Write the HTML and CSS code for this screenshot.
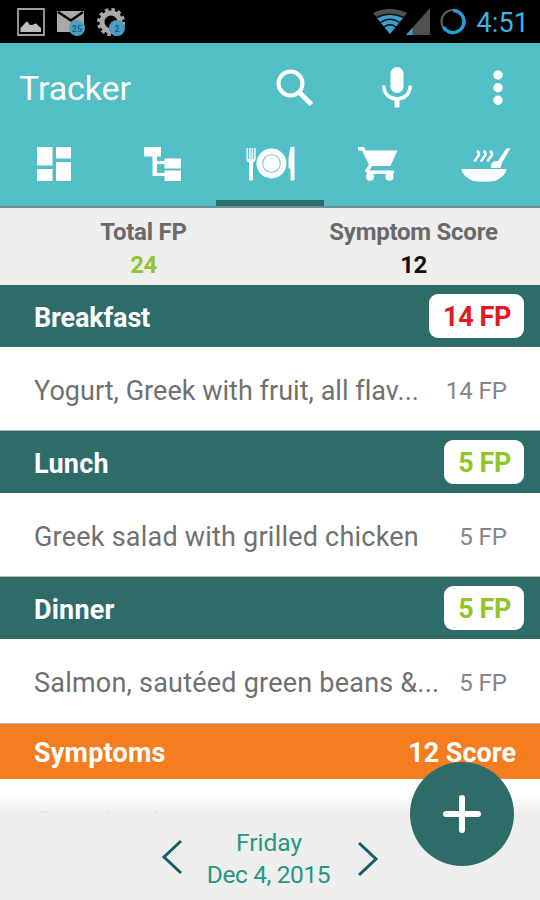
FILE: index.html
```html
<!DOCTYPE html>
<html lang="en">
<head>
<meta charset="utf-8">
<title>Tracker</title>
<link rel="stylesheet" href="styles.css">
</head>
<body>
<div class="app">
  <div class="statusbar">
    <div class="notices">
      <svg width="28" height="28" viewBox="0 0 28 28"><path fill="none" stroke="#a0a0a0" stroke-width="1.800" d="M1 1h26v26H1z"/><path fill="#bdbdbd" d="M3.500 24v-4l2-2 3.500-4q1-1 2 .5l2 2.500h2l3.500-1.500q1.500 0 2.500 2l3 2.500v4z"/></svg>
      <svg width="30" height="28" viewBox="0 0 30 28"><path fill="#a9a9a9" d="M1 3h27v21H1z"/><path fill="none" stroke="#000" stroke-width="2.500" d="M2 4l13 8.500L27 4"/><circle cx="21" cy="20" r="8" fill="#4b9fc5"/><text class="count" x="21" y="23.500" text-anchor="middle">25</text></svg>
      <svg width="30" height="28" viewBox="0 0 30 28"><circle cx="14" cy="14" r="12.500" fill="none" stroke="#a9a9a9" stroke-width="3" stroke-dasharray="3.500 3.045"/><circle cx="14" cy="14" r="9" fill="none" stroke="#a9a9a9" stroke-width="5"/><circle cx="20" cy="20" r="8" fill="#4b9fc5"/><text class="count" x="20" y="23.500" text-anchor="middle">2</text></svg>
    </div>
    <div class="system">
      <svg width="34" height="26" viewBox="0 0 34 26"><path fill="#505050" d="M0 5Q17-3 34 5L17 26z"/><path fill="#3aa0cc" d="M3.500 9.500Q17 3 30.500 9.500L17 26z"/><path fill="none" stroke="#0a0a0a" stroke-width="1.500" d="M3.500 9.500Q17 3 30.500 9.500M7.500 14.500q9.500-6.500 19 0M11 19q6-4.500 12 0"/></svg>
      <svg width="24" height="27" viewBox="0 0 24 27"><path fill="#505050" d="M24 0v27H0z"/><path fill="#3aa0cc" d="M6.500 19.700V27H0z"/></svg>
      <svg width="26" height="27" viewBox="0 0 26 27"><circle cx="13" cy="13.500" r="11.500" fill="none" stroke="#606060" stroke-width="2"/><path fill="none" stroke="#22a0d3" stroke-width="3.500" d="M13 2.500a11 11 0 1 1-9.600 16.300"/></svg>
      <span class="clock">4:51</span>
    </div>
  </div>
  <header class="appbar">
    <div class="toolbar">
      <h1 class="title">Tracker</h1>
      <svg class="search" width="38" height="38" viewBox="0 0 38 38"><circle cx="14.500" cy="14.500" r="12" fill="none" stroke="#fff" stroke-width="4"/><path stroke="#fff" stroke-width="5" d="M23 23l12.500 12.500"/></svg>
      <svg class="mic" width="32" height="42" viewBox="0 0 32 42"><rect x="9.500" y="1" width="13" height="26" rx="6.500" fill="#fff"/><path fill="none" stroke="#fff" stroke-width="3.500" d="M2.700 19.500C3 37.500 29 37.500 29.300 19.500"/><path stroke="#fff" stroke-width="5" d="M16 33v8.500"/></svg>
      <svg class="more" width="10" height="36" viewBox="0 0 10 36"><g fill="#fff"><circle cx="5" cy="5" r="4.700"/><circle cx="5" cy="17.700" r="4.700"/><circle cx="5" cy="30.300" r="4.700"/></g></svg>
    </div>
    <nav class="tabs">
      <a class="tab"><svg width="34" height="34" viewBox="0 0 34 34"><path fill="#fff" d="M0 0h15.500v18.500H0zM19 0h15v11.500H19zM0 22h15.500v12H0zM19 15h15v19H19z"/></svg></a>
      <a class="tab"><svg width="37" height="34" viewBox="0 0 37 34"><path fill="#fff" d="M0 0h17v9.500h-4V14h7.500v-2.500H37v10H20.500V17H13v9h7.500v-2.500H37V34H20.500v-5H8.500V9.500H0z"/></svg></a>
      <a class="tab tab-active"><svg width="50" height="34" viewBox="0 0 50 34"><g fill="#fff"><circle cx="26.500" cy="16.500" r="15"/><path d="M1.500 12h9v1q-1 2-2.500 2.500V33q-2 1.500-4 0V15.500Q2 15 1.500 13zM45.500 0h4v33q-2 1.500-4 0V22l-2-1V12z"/></g><path stroke="#fff" stroke-opacity=".85" stroke-width="1.700" d="M2.200 1v11M4.800 1v11M7.300 1v11M9.900 1v11"/><circle cx="26.500" cy="16.500" r="8.800" fill="none" stroke="#8bcdd1" stroke-width="1.200"/></svg></a>
      <a class="tab"><svg width="40" height="34" viewBox="0 0 40 34"><path fill="none" stroke="#fff" stroke-width="3.500" stroke-linejoin="round" d="M0 1.800h5l8 16-4 6 2 1.500h25"/><path fill="#fff" d="M6 3.500h33.500l-7 15.500H13z"/><circle cx="12" cy="29.800" r="4" fill="#fff"/><circle cx="31.500" cy="29.800" r="4" fill="#fff"/></svg></a>
      <a class="tab"><svg width="50" height="36" viewBox="0 0 50 36"><path fill="#fff" d="M.5 22h45C45 27.500 40 31 34 34q-11 1.500-22 0C6 31 1 27.500 .5 22zM30 20q0-7 7-6L45.500 1.200l4 0L41 16l-1.500 5H30z"/><path fill="none" stroke="#fff" stroke-width="2.600" d="M16 4q3.500 2 1.200 5t-3.700 5.500M22.500 4q3.500 2 1.200 5T20 14.500M29 4q3.500 2 1.200 5t-3.700 5.500"/></svg></a>
    </nav>
  </header>
  <section class="summary">
    <div class="stat"><span class="label">Total FP</span><span class="value good">24</span></div>
    <div class="stat"><span class="label">Symptom Score</span><span class="value">12</span></div>
  </section>
  <main class="meals">
    <h2 class="meal"><span class="name">Breakfast</span><span class="badge bad">14 FP</span></h2>
    <div class="item"><span class="food">Yogurt, Greek with fruit, all flav...</span><span class="points">14 FP</span></div>
    <h2 class="meal"><span class="name wide">Lunch</span><span class="badge good">5 FP</span></h2>
    <div class="item"><span class="food roomy">Greek salad with grilled chicken</span><span class="points">5 FP</span></div>
    <h2 class="meal"><span class="name wide">Dinner</span><span class="badge good">5 FP</span></h2>
    <div class="item"><span class="food roomy">Salmon, sautéed green beans &amp;...</span><span class="points">5 FP</span></div>
    <h2 class="meal symptoms"><span class="name wide">Symptoms</span><span class="score">12 Score</span></h2>
    <div class="item next-row"><span class="food roomy">Constipation</span></div>
  </main>
  <footer class="datebar">
    <svg class="prev" width="22" height="36" viewBox="0 0 22 36"><path fill="none" stroke="#135e61" stroke-width="3" d="M20 2L3 18l17 16"/></svg>
    <div class="date"><span class="day">Friday</span><span class="full">Dec 4, 2015</span></div>
    <svg class="next" width="22" height="36" viewBox="0 0 22 36"><path fill="none" stroke="#135e61" stroke-width="3" d="M2 2l17 16L2 34"/></svg>
  </footer>
  <button class="add" aria-label="Add"><svg width="38" height="38" viewBox="0 0 38 38"><path stroke="#fff" stroke-width="6" stroke-linecap="round" d="M19 3v32M3 19h32"/></svg></button>
</div>
</body>
</html>
```
FILE: styles.css
```css
* { box-sizing: border-box; margin: 0; padding: 0; }
body { font-family: Roboto, "Liberation Sans", sans-serif; background: #fff; }
svg { display: block; flex: none; }
span, h1 { white-space: nowrap; }
.app { position: relative; width: 540px; height: 900px; overflow: hidden; display: flex; flex-direction: column; }
.statusbar { flex: none; height: 43px; background: #000; display: flex; justify-content: space-between; padding: 8px 11px 0 17px; }
.notices { display: flex; gap: 11px; }
.system { display: flex; }
.system svg:nth-child(2) { margin-left: -1px; }
.system svg:nth-child(3) { margin-left: 10px; }
.clock { color: #3eb3e2; font-size: 27px; line-height: 31px; margin-left: 11px; letter-spacing: 0.1px; }
.count { font-size: 9px; font-weight: 700; fill: #235f80; }
.appbar { flex: none; height: 165px; background: #52bec5; border-bottom: 2px solid #6c9093; }
.toolbar { height: 90px; display: flex; align-items: flex-start; padding-left: 19px; }
.title { width: 257px; color: #fff; font-size: 34px; line-height: 40px; font-weight: 400; letter-spacing: -0.1px; margin-top: 25px; }
.search { margin-top: 26px; }
.mic { margin: 23px 0 0 67px; }
.more { margin: 27px 0 0 80px; }
.tabs { height: 73px; display: grid; grid-template-columns: repeat(5, 108px); }
.tab { display: flex; justify-content: center; padding-top: 14px; }
.tab-active { border-bottom: 6px solid #2d6c69; }
.summary { flex: none; height: 77px; background: #eee; display: flex; }
.stat { width: 287px; display: flex; flex-direction: column; align-items: center; padding-top: 8px; }
.stat:last-child { width: 253px; }
.label { color: #6a6a6a; font-size: 24px; line-height: 32px; font-weight: 700; letter-spacing: -0.25px; }
.value { color: #111; font-size: 24px; line-height: 34px; font-weight: 700; letter-spacing: -0.5px; }
.meals { flex: none; }
.meal { height: 62px; background: #2e6c6a; color: #fff; display: flex; align-items: center; justify-content: space-between; padding: 0 16px 0 34px; font-size: 27px; line-height: 32px; font-weight: 700; margin-bottom: 0.2px; }
.name, .score { padding-top: 4px; }
.name { letter-spacing: -0.15px; }
.wide { letter-spacing: 0.2px; }
.badge { height: 44px; line-height: 46px; border-radius: 9px; background: #fff; padding: 0 13px 0 14px; font-size: 27px; letter-spacing: -0.4px; }
.item { height: 84px; display: flex; align-items: center; justify-content: space-between; padding: 4px 33px 0 34px; border-bottom: 1px solid #b5b5b8; color: #707070; }
.food { font-size: 27px; letter-spacing: 0.03px; }
.roomy { letter-spacing: 0.22px; }
.points { font-size: 24px; color: #858585; }
.bad { color: #e51920; }
.good { color: #92c42c; }
.symptoms { height: 55px; background: #f47d20; padding-right: 24px; }
.next-row { height: 82px; color: #999; border: 0; }
.datebar { position: absolute; left: 0; right: 0; bottom: 0; height: 106px; padding-top: 33px; display: flex; justify-content: center; background: linear-gradient(transparent, rgba(238, 238, 238, 0.85) 18px, #eee 20px); }
.prev { margin-top: 12px; }
.next { margin-top: 14px; }
.date { width: 174px; padding-right: 3px; display: flex; flex-direction: column; align-items: center; color: #249783; font-size: 24.500px; line-height: 32px; }
.day { padding-left: 1px; }
.full { letter-spacing: -0.4px; }
.add { position: absolute; left: 410px; top: 762px; width: 104px; height: 104px; border: 0; border-radius: 50%; background: #2d6c69; display: grid; place-items: center; }
```
